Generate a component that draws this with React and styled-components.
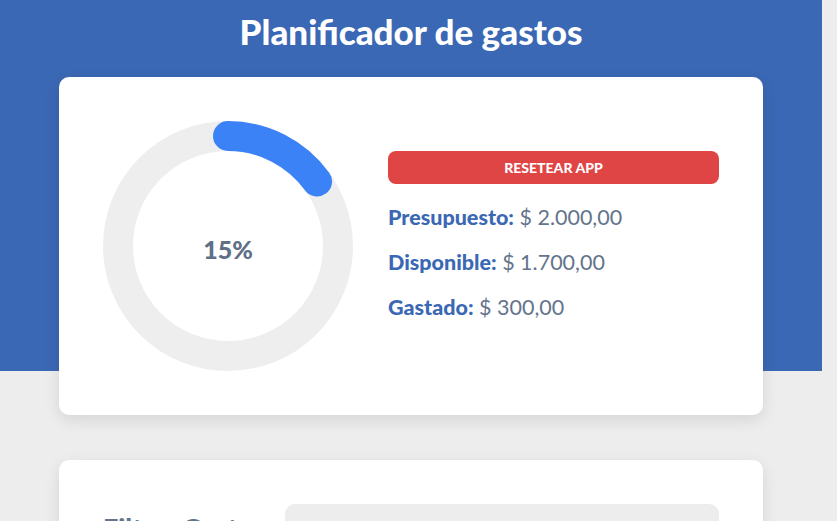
import React from 'react';
import styled, { createGlobalStyle } from 'styled-components';

const GlobalStyle = createGlobalStyle`
    html, body {
        margin: 0;
        padding: 0;
        background: #ededed;
        font-family: Lato, "Open Sans", sans-serif;
    }
    * { box-sizing: border-box; }
`;

const Page = styled.div`
    width: 822px;
    min-height: 700px;
    background: linear-gradient(to bottom, #3b68b4 0, #3b68b4 371px, #ededed 371px);
    padding-top: 10px;
`;

const Title = styled.h1`
    margin: 0;
    color: #fff;
    text-align: center;
    font-size: 35px;
    line-height: 42px;
    font-weight: 900;
`;

const Card = styled.section`
    width: 704px;
    margin: ${p => p.$top}px auto 0;
    padding: 44px;
    background: #fff;
    border-radius: 10px;
    box-shadow: 0 5px 15px rgba(0, 0, 0, 0.1);
`;

const BudgetGrid = styled.div`
    display: flex;
    align-items: center;
    gap: 35px;
`;

const Ring = styled.div`
    position: relative;
    width: 250px;
    height: 250px;
    flex-shrink: 0;
`;

const RingLabel = styled.span`
    position: absolute;
    inset: 0;
    display: flex;
    align-items: center;
    justify-content: center;
    padding-top: 5px;
    font-size: 25px;
    font-weight: 900;
    color: #5f6f86;
`;

const Details = styled.div`
    flex: 1;
    display: flex;
    flex-direction: column;
    margin-top: -22px;
`;

const ResetButton = styled.button`
    height: 33px;
    border: none;
    border-radius: 8px;
    background: #e04545;
    color: #fff;
    font-family: inherit;
    font-size: 14px;
    font-weight: 900;
    text-transform: uppercase;
    cursor: pointer;
    margin-bottom: 20px;
`;

const Line = styled.p`
    margin: 0;
    font-size: 21.5px;
    line-height: 26px;
    color: #64748b;
    & + & { margin-top: 19px; }

    span {
        color: #3b68b4;
        font-weight: 900;
    }
`;

const Field = styled.div`
    display: flex;
    align-items: center;
    gap: 20px;
`;

const FilterLabel = styled.label`
    font-size: 27px;
    font-weight: 900;
    color: #64748b;
`;

const Select = styled.select`
    flex: 1;
    height: 46px;
    padding: 10px;
    border: none;
    border-radius: 10px;
    background: #ededed;
    font-family: inherit;
    font-size: 20px;
    color: #64748b;
    appearance: none;
`;

const Progress = ({ percent }) => {
    const r = 44;
    const c = 2 * Math.PI * r;
    return (
        <Ring>
            <svg width="250" height="250" viewBox="0 0 100 100">
                <circle cx="50" cy="50" r={r} fill="none" stroke="#eeeeee" strokeWidth="12" />
                <circle
                    cx="50"
                    cy="50"
                    r={r}
                    fill="none"
                    stroke="#3b82f6"
                    strokeWidth="12"
                    strokeLinecap="round"
                    strokeDasharray={`${(c * percent) / 100} ${c}`}
                    transform="rotate(-90 50 50)"
                />
            </svg>
            <RingLabel>{percent}%</RingLabel>
        </Ring>
    );
};

const App = () => {
    return (
        <>
            <GlobalStyle />
            <Page>
                <Title>Planificador de gastos</Title>
                <Card $top={25}>
                    <BudgetGrid>
                        <Progress percent={15} />
                        <Details>
                            <ResetButton type="button">Resetear App</ResetButton>
                            <Line><span>Presupuesto:</span> $ 2.000,00</Line>
                            <Line><span>Disponible:</span> $ 1.700,00</Line>
                            <Line><span>Gastado:</span> $ 300,00</Line>
                        </Details>
                    </BudgetGrid>
                </Card>
                <Card $top={45}>
                    <Field>
                        <FilterLabel htmlFor="filtro">Filtrar Gastos</FilterLabel>
                        <Select id="filtro" defaultValue="">
                            <option value="">-- Todas las categorías --</option>
                        </Select>
                    </Field>
                </Card>
            </Page>
        </>
    );
};

export default App;
